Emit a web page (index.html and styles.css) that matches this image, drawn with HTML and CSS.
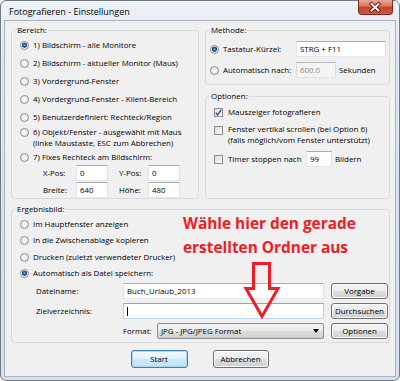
FILE: index.html
```html
<!DOCTYPE html>
<html lang="de">
<head>
  <meta charset="UTF-8">
  <title>Fotografieren - Einstellungen</title>
  <link rel="stylesheet" href="styles.css">
</head>
<body>

<div class="window">
  <div class="titlebar">
    <span class="title">Fotografieren - Einstellungen</span>
    <button class="close" aria-label="Schließen">
      <svg width="35" height="15" viewBox="0 0 35 15">
        <path d="M13.5 4 L20.5 10.5 M20.5 4 L13.5 10.5" stroke="#5a1a10" stroke-width="3.6" stroke-linecap="square"/>
        <path d="M13.5 4 L20.5 10.5 M20.5 4 L13.5 10.5" stroke="#fff" stroke-width="1.8" stroke-linecap="square"/>
      </svg>
    </button>
  </div>

  <div class="client">
    <div class="top">
      <fieldset class="group bereich">
        <legend>Bereich:</legend>
        <div class="opt"><span class="radio on"></span>1) Bildschirm - alle Monitore</div>
        <div class="opt"><span class="radio"></span>2) Bildschirm - aktueller Monitor (Maus)</div>
        <div class="opt"><span class="radio"></span>3) Vordergrund-Fenster</div>
        <div class="opt"><span class="radio"></span>4) Vordergrund-Fenster - Klient-Bereich</div>
        <div class="opt"><span class="radio"></span>5) Benutzerdefiniert: Rechteck/Region</div>
        <div class="opt tall"><span class="radio"></span><span>6) Objekt/Fenster - ausgewählt mit Maus<br>(linke Maustaste, ESC zum Abbrechen)</span></div>
        <div class="opt short"><span class="radio"></span>7) Fixes Rechteck am Bildschirm:</div>
        <div class="coords">
          <span class="lbl">X-Pos:</span><span class="field">0</span>
          <span class="lbl">Y-Pos:</span><span class="field">0</span>
          <span class="lbl">Breite:</span><span class="field">640</span>
          <span class="lbl">Höhe:</span><span class="field">480</span>
        </div>
      </fieldset>

      <div class="side">
        <fieldset class="group methode">
          <legend>Methode:</legend>
          <div class="mrow">
            <span class="radio on"></span>
            <span class="mlabel">Tastatur-Kürzel:</span>
            <span class="field wide">STRG + F11</span>
          </div>
          <div class="mrow">
            <span class="radio"></span>
            <span class="mlabel">Automatisch nach:</span>
            <span class="field off">600.0</span>
            <span class="unit">Sekunden</span>
          </div>
        </fieldset>

        <fieldset class="group optionen">
          <legend>Optionen:</legend>
          <div class="chk">
            <span class="box">
              <svg width="7" height="7" viewBox="0 0 7 7"><path d="M0.8 3.6 L2.6 6 L6.3 0.6" fill="none" stroke="#34468a" stroke-width="1.3"/></svg>
            </span>
            Mauszeiger fotografieren
          </div>
          <div class="chk two">
            <span class="box"></span>
            <span>Fenster vertikal scrollen (bei Option 6)<br>(falls möglich/vom Fenster unterstützt)</span>
          </div>
          <div class="chk timer">
            <span class="box"></span>
            <span class="tlabel">Timer stoppen nach</span>
            <span class="field small">99</span>
            <span class="unit">Bildern</span>
          </div>
        </fieldset>
      </div>
    </div>

    <fieldset class="group ergebnis">
      <legend>Ergebnisbild:</legend>
      <div class="opt sm"><span class="radio"></span>Im Hauptfenster anzeigen</div>
      <div class="opt sm"><span class="radio"></span>In die Zwischenablage kopieren</div>
      <div class="opt sm"><span class="radio"></span>Drucken (zuletzt verwendeter Drucker)</div>
      <div class="opt sm"><span class="radio on"></span>Automatisch als Datei speichern:</div>
      <div class="files">
        <span class="lbl">Dateiname:</span>
        <span class="field">Buch_Urlaub_2013</span>
        <button class="btn">Vorgabe</button>

        <span class="lbl">Zielverzeichnis:</span>
        <span class="field focus"><span class="caret"></span></span>
        <button class="btn">Durchsuchen</button>

        <span></span>
        <span class="format">
          <span class="flabel">Format:</span>
          <span class="select">JPG - JPG/JPEG Format<span class="drop"></span></span>
        </span>
        <button class="btn">Optionen</button>
      </div>
    </fieldset>

    <div class="actions">
      <button class="btn default start">Start</button>
      <button class="btn cancel">Abbrechen</button>
    </div>
  </div>

  <div class="note">Wähle hier den gerade<br>erstellten Ordner aus</div>
  <svg class="arrow" width="38" height="60" viewBox="0 0 38 60">
    <path d="M10.5 3.5 H26.5 V28.5 H35 L19 56.5 L3 28.5 H10.5 Z" fill="none" stroke="#ee1c24" stroke-width="3"/>
  </svg>
</div>

</body>
</html>
```

FILE: styles.css
```css
body {
  margin: 0;
  font-family: "Open Sans", "Noto Sans", sans-serif;
  font-size: 7.9px;
  color: #000;
  background: #fff;
}
.window {
  position: relative;
  width: 400px;
  height: 381px;
  box-sizing: border-box;
  border: 1px solid #6f7b87;
  border-radius: 6px;
  padding: 0 3px 3px;
  background: linear-gradient(#edf2f7, #dde6ef 60px, #d8e1eb);
  display: flex;
  flex-direction: column;
}
.titlebar {
  height: 19px;
  display: flex;
  align-items: center;
  padding-left: 5px;
}
.title {
  flex: 1;
  font-size: 9px;
  padding-top: 1px;
}
.close {
  align-self: flex-start;
  margin: -1px 3px 0 0;
  width: 35px;
  height: 15px;
  padding: 0;
  box-sizing: border-box;
  border: 1px solid #7c2a1c;
  border-top: 0;
  border-radius: 0 0 4px 4px;
  background: linear-gradient(#eaa797, #d97a64 40%, #c5432a 55%, #d2593d);
  display: flex;
  align-items: center;
  justify-content: center;
}
.close svg {
  display: block;
  margin: 0 -1px;
}
.client {
  flex: 1;
  border: 1px solid #a6b2be;
  background: #f0f0f0;
  padding: 4px 5px 0 6px;
}
.top {
  display: grid;
  grid-template-columns: 188px 185px;
  column-gap: 6px;
}
.side {
  display: flex;
  flex-direction: column;
  gap: 6px;
}
.group {
  margin: 0;
  padding: 0;
  min-width: 0;
  border: 1px solid #d5dce3;
  border-radius: 3px;
}
.group legend {
  margin-left: 4px;
  padding: 0 1px;
  line-height: 10px;
}

/* radios and checkboxes */
.radio {
  flex: none;
  width: 9px;
  height: 9px;
  box-sizing: border-box;
  border: 1px solid #8b8d90;
  border-radius: 50%;
  margin-right: 4px;
  background: radial-gradient(circle at 50% 45%, #fdfdfd, #dcdcdc);
}
.radio.on {
  background: radial-gradient(circle at 50% 45%, #7cc0f2 0, #2468b4 1.3px, #163f78 2.3px, #e6e9ec 2.8px, #fafafa 4px);
}
.box {
  flex: none;
  width: 9px;
  height: 9px;
  box-sizing: border-box;
  border: 1px solid #8b8d90;
  margin-right: 5px;
  background: linear-gradient(135deg, #dcdcdc, #fbfbfb);
  display: flex;
  align-items: center;
  justify-content: center;
}

.opt {
  display: flex;
  align-items: center;
  height: 18px;
  margin-left: 8px;
  line-height: 11px;
  white-space: nowrap;
}
.opt.tall {
  height: 24px;
}
.opt.tall .radio {
  align-self: flex-start;
  margin-top: 2px;
}
.opt.short {
  height: 15px;
}
.opt.sm {
  height: 16.5px;
}
.bereich {
  padding-top: 1px;
}

.field {
  display: block;
  height: 16px;
  box-sizing: border-box;
  border: 1px solid;
  border-color: #abadb3 #dbdfe6 #e3e9ef #e2e3ea;
  background: #fff;
  padding: 0 3px;
  line-height: 14px;
  white-space: nowrap;
}
.field.off {
  width: 40px;
  background: #f4f4f4;
  border-color: #b5b8bc #dadde1 #e0e3e6 #dadde1;
  color: #8a8a8a;
}
.field.wide {
  width: 90px;
}
.field.small {
  width: 26px;
}
.field.focus {
  border-color: #7fa9d4 #b4cde8 #c3d8ee #b4cde8;
  display: flex;
  align-items: center;
}
.caret {
  width: 1px;
  height: 9px;
  background: #000;
}

.coords {
  display: grid;
  grid-template-columns: 33px 43px 29px 32px;
  grid-auto-rows: 16px;
  row-gap: 1px;
  margin-left: 31px;
}
.coords .field {
  width: 32px;
}
.lbl {
  display: flex;
  align-items: center;
}

.methode {
  padding-bottom: 6px;
}
.mrow {
  display: flex;
  align-items: center;
  height: 16px;
  margin: 6px 0 0 4px;
}
.mrow + .mrow {
  margin-top: 5px;
}
.mlabel {
  width: 73px;
}
.unit {
  margin-left: 3px;
}

.optionen {
  flex: 1;
  padding-top: 2px;
}
.chk {
  display: flex;
  align-items: center;
  height: 18px;
  margin-left: 8px;
  line-height: 11px;
  white-space: nowrap;
}
.chk.two {
  height: auto;
  align-items: flex-start;
  padding: 3px 0 1px;
}
.chk.two .box {
  margin-top: 2px;
}
.chk.timer {
  margin-top: 3px;
}
.tlabel {
  width: 78px;
}

.ergebnis {
  margin-top: 5px;
  padding: 2px 0 3px;
}
.files {
  display: grid;
  grid-template-columns: 80px 201px 57px;
  grid-auto-rows: 16px;
  column-gap: 7px;
  row-gap: 4px;
  margin: 1px 0 0 24px;
}
.format {
  display: flex;
  align-items: center;
}
.flabel {
  width: 34px;
}
.select {
  flex: 1;
  height: 16px;
  box-sizing: border-box;
  border: 1px solid #8e8f8f;
  border-radius: 2px;
  background: linear-gradient(#f2f2f2, #ebebeb 50%, #dddddd 50%, #cfcfcf);
  display: flex;
  align-items: center;
  padding-left: 3px;
}
.drop {
  margin-left: auto;
  margin-right: 4px;
  border-left: 3px solid transparent;
  border-right: 3px solid transparent;
  border-top: 4px solid #000;
}

.btn {
  height: 16px;
  padding: 0;
  box-sizing: border-box;
  border: 1px solid #707070;
  border-radius: 3px;
  background: linear-gradient(#f4f4f4, #ececec 50%, #dedede 50%, #d0d0d0);
  box-shadow: inset 0 0 0 1px #fbfbfb;
  font: inherit;
  color: #000;
  white-space: nowrap;
}
.actions {
  display: flex;
  justify-content: center;
  gap: 25px;
  margin: 7px 2px 0 0;
}
.actions .btn {
  height: 18px;
}
.start {
  width: 57px;
}
.cancel {
  width: 56px;
}
.btn.default {
  border-color: #3c7fb1;
  background: linear-gradient(#f2f9fe, #e2f1fc 50%, #cfe8f9 50%, #c2e0f6);
  box-shadow: inset 0 0 0 1px #a8d8f8;
}

/* red annotation drawn over the dialog */
.note {
  position: absolute;
  left: 182px;
  top: 211px;
  font-size: 15.4px;
  font-weight: 700;
  line-height: 23.5px;
  color: #ee1c24;
  white-space: nowrap;
}
.arrow {
  position: absolute;
  left: 242px;
  top: 259px;
}
```
